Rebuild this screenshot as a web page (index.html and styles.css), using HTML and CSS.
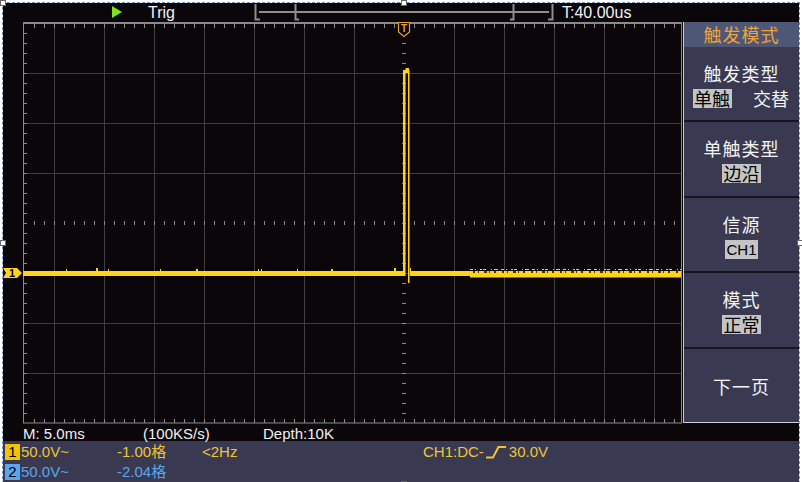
FILE: index.html
```html
<!DOCTYPE html>
<html lang="zh-CN">
<head>
  <meta charset="UTF-8" />
  <meta name="viewport" content="width=device-width, initial-scale=1.0"/>
  <title>触发模式</title>
  <link rel="stylesheet" href="styles.css">
</head>
<body>
  <div class="scope">
    <div class="topbar">
      <div class="run-state">
        <span class="run-arrow"></span>
        <span class="run-label">Trig</span>
      </div>
      <svg class="memory-bar" width="302" height="19" viewBox="253 3 302 19">
        <path d="M255.5 4V19.5H260M552.5 4V19.5H548M295.5 4V19.5H299M513.5 4V19.5H510" />
        <path d="M259 12H549" />
      </svg>
      <span class="timebase">T:40.00us</span>
    </div>

    <div class="main">
      <div class="screen">
        <svg width="680" height="402" viewBox="3 22 680 402">
          <!-- divisions -->
          <path class="grid" d="M54.5 24V423M104.5 24V423M154.5 24V423M204.5 24V423M254.5 24V423M304.5 24V423M354.5 24V423M454.5 24V423M504.5 24V423M554.5 24V423M604.5 24V423M654.5 24V423M24 73.5H681M24 123.5H681M24 173.5H681M24 273.5H681M24 323.5H681M24 373.5H681" />
          <g class="ticks">
            <line x1="34" y1="26" x2="681" y2="26" />
            <line x1="34" y1="421" x2="681" y2="421" />
            <line x1="25" y1="33" x2="25" y2="423" />
            <line x1="404" y1="33" x2="404" y2="423" />
            <line x1="34" y1="223" x2="681" y2="223" />
          </g>
          <rect class="border" x="23.5" y="22.5" width="658" height="400.5" />
          <line class="border" x1="23" y1="23.5" x2="682" y2="23.5" />

          <!-- CH1 trace -->
          <g class="trace">
            <rect x="23" y="271" width="380" height="5" />
            <rect x="403" y="70" width="2.5" height="206" />
            <rect x="403" y="70" width="6" height="3" />
            <rect x="405.5" y="68" width="3.5" height="3" />
            <rect x="408" y="70" width="1.5" height="213" />
            <rect x="410" y="271" width="60" height="5" />
            <rect x="470" y="271" width="211" height="6.5" />
            <path d="M66 269h1v2h-1zM96 268h2v3h-2zM108 269h1v2h-1zM160 269h1v2h-1zM196 269h2v2h-2zM258 269h1v2h-1zM261 269h1v2h-1zM297 269h1v2h-1zM331 269h2v2h-2zM394 268h2v3h-2zM410 268h1v3h-1z" />
          </g>
          <line class="noise-top" x1="470" y1="269.5" x2="681" y2="269.5" />
          <line class="noise-cut" x1="473" y1="272" x2="681" y2="272" />

          <!-- channel 1 level marker -->
          <polygon class="ch-marker" points="3,268 17,268 22,273 17,278 3,278 6,273" />
          <text class="ch-marker-num" x="12" y="277">1</text>

          <!-- trigger position marker -->
          <polygon class="trig-marker" points="398.5,22.5 409.5,22.5 409.5,32 404,36.5 398.5,32" />
          <text class="trig-marker-t" x="404" y="32">T</text>
        </svg>
      </div>

      <div class="menu">
        <div class="menu-title">触发模式</div>
        <div class="menu-item">
          <div class="item-name">触发类型</div>
          <div class="item-options">
            <span class="opt selected">单触</span>
            <span class="opt">交替</span>
          </div>
        </div>
        <div class="menu-item">
          <div class="item-name">单触类型</div>
          <div class="item-options"><span class="opt selected">边沿</span></div>
        </div>
        <div class="menu-item">
          <div class="item-name">信源</div>
          <div class="item-options"><span class="opt selected latin">CH1</span></div>
        </div>
        <div class="menu-item">
          <div class="item-name">模式</div>
          <div class="item-options"><span class="opt selected">正常</span></div>
        </div>
        <div class="menu-item">
          <div class="item-name">下一页</div>
        </div>
      </div>
    </div>

    <div class="info">
      <span>M: 5.0ms</span>
      <span>(100KS/s)</span>
      <span>Depth:10K</span>
    </div>

    <div class="status">
      <div class="ch-row ch1">
        <span class="ch-num">1</span>
        <span class="volts">50.0V~</span>
        <span class="offset">-1.00格</span>
        <span class="freq">&lt;2Hz</span>
        <span class="trig-info">CH1:DC-<svg class="edge" width="20" height="13" viewBox="0 0 20 13"><path d="M0 11.5H7L12.5 1H20" /></svg>30.0V</span>
      </div>
      <div class="ch-row ch2">
        <span class="ch-num">2</span>
        <span class="volts">50.0V~</span>
        <span class="offset">-2.04格</span>
      </div>
    </div>
  </div>

  <div class="select-frame">
    <span class="handle h-tl"></span>
    <span class="handle h-top"></span>
    <span class="handle h-left"></span>
    <span class="handle h-right"></span>
    <span class="handle h-bottom"></span>
  </div>
</body>
</html>
```

FILE: styles.css
```css
body {
  margin: 0;
  position: relative;
  background: #ffffff;
  font-family: "Liberation Sans", "Noto Sans CJK SC", sans-serif;
  overflow: hidden;
}

.scope {
  width: 796px;
  height: 479px;
  margin: 3px 0 0 3px;
  background: #0b060a;
  color: #f2f2f2;
}

/* top strip */
.topbar {
  display: flex;
  align-items: center;
  height: 19px;
  font-size: 16px;
  line-height: 19px;
}

.run-state {
  display: flex;
  align-items: center;
  width: 250px;
  padding-left: 109px;
  box-sizing: border-box;
}

.run-arrow {
  width: 0;
  height: 0;
  margin-bottom: 2px;
  border-left: 10px solid #7ee41c;
  border-top: 6.5px solid transparent;
  border-bottom: 6.5px solid transparent;
}

.run-label {
  margin-left: 26px;
}

.memory-bar {
  display: block;
  fill: none;
  stroke: #8e8e8e;
  stroke-width: 2;
}

.timebase {
  margin-left: 7px;
}

/* grid + menu */
.main {
  display: flex;
  height: 402px;
}

.screen {
  width: 680px;
}

.screen svg {
  display: block;
}

.grid {
  stroke: #3e3e3e;
  stroke-width: 1;
}

.ticks line {
  stroke: #8a8a8a;
  stroke-width: 4;
  stroke-dasharray: 1 9;
}

.border {
  fill: none;
  stroke: #8a8a8a;
  stroke-width: 1;
}

.trace {
  fill: #ffd31c;
}

.noise-top {
  stroke: #ffd31c;
  stroke-width: 1;
  stroke-dasharray: 3 2 1 4 2 1 3 5 1 2 4 3;
}

.noise-cut {
  stroke: #0b060a;
  stroke-width: 1.5;
  stroke-dasharray: 2 3 1 5 3 2 1 4 2 6;
}

.ch-marker {
  fill: #ffd31c;
}

.ch-marker-num {
  font-size: 11px;
  font-weight: bold;
  text-anchor: middle;
  fill: #000;
}

.trig-marker {
  fill: #0b060a;
  stroke: #eca22e;
  stroke-width: 1.2;
}

.trig-marker-t {
  font-size: 10px;
  font-weight: bold;
  text-anchor: middle;
  fill: #eca22e;
}

.menu {
  flex: 1;
  align-self: flex-start;
  height: 401px;
  display: flex;
  flex-direction: column;
  box-sizing: border-box;
  background: #393a51;
  border-left: 1px solid #cfcfd6;
  border-bottom: 1px solid #cfcfd6;
  font-family: "Noto Sans CJK SC", sans-serif;
  font-size: 18px;
  color: #f4f4f4;
}

.menu-title {
  height: 25px;
  line-height: 25px;
  text-align: center;
  letter-spacing: 1px;
  background: #4f5777;
  color: #eca43a;
}

.menu-item {
  flex: 1;
  display: flex;
  flex-direction: column;
  align-items: center;
  justify-content: center;
  gap: 5px;
  padding-top: 2px;
}

.menu-item + .menu-item {
  border-top: 2px solid #16161e;
}

.item-name {
  line-height: 22px;
  letter-spacing: 1px;
}

.item-options {
  display: flex;
  gap: 20px;
}

.opt {
  height: 19px;
  line-height: 19px;
  padding: 0 1.5px;
}

.opt.selected {
  background: #c4c4c4;
  color: #000;
}

.opt.latin {
  font-family: "Liberation Sans", sans-serif;
  font-size: 15px;
  padding: 0 1px;
}

/* sampling line */
.info {
  display: flex;
  height: 17px;
  padding: 2px 0 0 20px;
  box-sizing: border-box;
  font-size: 15px;
  line-height: 15px;
}

.info span {
  width: 120px;
}

/* channel status */
.status {
  height: 41px;
  padding-top: 1px;
  box-sizing: border-box;
  background: #393a51;
  font-size: 15px;
}

.ch-row {
  display: flex;
  align-items: center;
  height: 20px;
  line-height: 20px;
}

.ch-num {
  width: 15px;
  height: 16px;
  margin: 0 1px 0 2px;
  line-height: 16px;
  text-align: center;
  color: #000;
}

.ch1 {
  color: #f0c535;
}

.ch1 .ch-num {
  background: #f5c400;
}

.ch2 {
  color: #5aa6ee;
}

.ch2 .ch-num {
  background: #5aa6ee;
}

.volts {
  width: 96px;
}

.offset {
  width: 85px;
}

.freq {
  width: 221px;
}

.trig-info {
  display: flex;
  align-items: center;
}

.edge {
  margin: 0 3px 0 2px;
  fill: none;
  stroke: currentColor;
  stroke-width: 2;
}

/* picture selection outline */
.select-frame {
  position: absolute;
  top: 2px;
  left: 2px;
  width: 798px;
  height: 482px;
  box-sizing: border-box;
  border: 1px dashed #7393c4;
  pointer-events: none;
}

.handle {
  position: absolute;
  width: 4px;
  height: 4px;
  background: #fff;
  border: 1px solid #666;
}

.h-tl { top: -3px; left: -3px; }
.h-top { top: -3px; left: 398px; }
.h-left { top: 237px; left: -3px; }
.h-right { top: 237px; right: -4px; }
.h-bottom { bottom: -4px; left: 398px; }
```
